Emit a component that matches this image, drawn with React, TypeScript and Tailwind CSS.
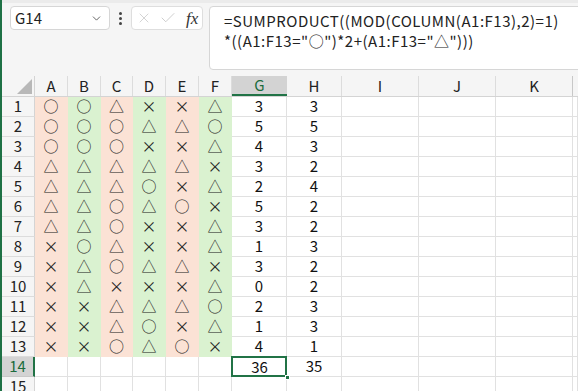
import { ChevronDown, X, Check } from 'lucide-react'

const PEACH = 'bg-[#fbe2d5] border-[#fbe2d5]'
const GREEN = 'bg-[#daf2d0] border-[#daf2d0]'

const symbolCols = ['A', 'B', 'C', 'D', 'E', 'F']
const symbolWidths = ['w-[33px]', 'w-[33px]', 'w-[32px]', 'w-[33px]', 'w-[33px]', 'w-[33px]']

const rows: { marks: string; g: number; h: number }[] = [
  { marks: '○○△××△', g: 3, h: 3 },
  { marks: '○○○△△○', g: 5, h: 5 },
  { marks: '○○○××△', g: 4, h: 3 },
  { marks: '△△△△△×', g: 3, h: 2 },
  { marks: '△△△○×△', g: 2, h: 4 },
  { marks: '△△○△○×', g: 5, h: 2 },
  { marks: '△△○××△', g: 3, h: 2 },
  { marks: '×○△××△', g: 1, h: 3 },
  { marks: '×△○△△×', g: 3, h: 2 },
  { marks: '×△×××△', g: 0, h: 2 },
  { marks: '××△△△○', g: 2, h: 3 },
  { marks: '××△○×△', g: 1, h: 3 },
  { marks: '××○△○×', g: 4, h: 1 },
]

const font = { fontFamily: '"Noto Sans CJK JP", "Noto Sans", sans-serif' }

function RowHeader({ label, selected }: { label: string; selected?: boolean }) {
  return (
    <div
      className={`w-[33px] h-[20px] shrink-0 flex items-center justify-center border-b box-border text-[15px] ${
        selected
          ? 'bg-[#d3d3d3] text-[#1b6b3c] border-r-2 border-r-[#217346] border-b-[#c8c8c8]'
          : 'bg-[#f5f5f5] text-[#222] border-r border-r-[#d4d4d4] border-b-[#dcdcdc]'
      }`}
    >
      {label}
    </div>
  )
}

function Cell({ className, children }: { className: string; children?: React.ReactNode }) {
  return (
    <div className={`h-[20px] shrink-0 box-border border-r border-b flex items-center justify-center text-[15px] text-[#111] ${className}`}>
      {children}
    </div>
  )
}

export default function App() {
  return (
    <div className="w-[578px] h-[391px] overflow-hidden bg-white border-l-2 border-[#1e7145] flex flex-col" style={font}>
      {/* formula bar */}
      <div className="h-[76px] shrink-0 bg-[#f5f5f5] border-t-[3px] border-[#ebebeb] flex items-start pt-[3px] pl-[8px]">
        <div className="w-[100px] h-[24px] shrink-0 bg-white border border-[#d6d6d6] rounded-[4px] flex items-center justify-between pl-[4px] pr-[6px] text-[15px] text-[#222]">
          <span>G14</span>
          <ChevronDown size={13} strokeWidth={1.5} className="text-[#444]" />
        </div>
        <div className="w-[21px] h-[24px] shrink-0 flex flex-col items-center justify-center gap-[2px]">
          <span className="w-[3px] h-[3px] rounded-full bg-[#444]" />
          <span className="w-[3px] h-[3px] rounded-full bg-[#444]" />
          <span className="w-[3px] h-[3px] rounded-full bg-[#444]" />
        </div>
        <div className="w-[72px] h-[24px] shrink-0 bg-white border border-[#dedede] rounded-[4px] flex items-center pl-[4px] gap-[7px]">
          <X size={16} strokeWidth={1.1} className="text-[#c4c4c4]" />
          <Check size={18} strokeWidth={1.1} className="text-[#c4c4c4]" />
          <span className="text-[17px] italic text-[#333] ml-[2px] leading-none" style={{ fontFamily: '"Liberation Serif", serif' }}>
            fx
          </span>
        </div>
        <div className="ml-[6px] w-[400px] h-[64px] shrink-0 bg-white border border-[#d6d6d6] rounded-[4px] pl-[14px] pt-[4px] text-[15px] tracking-[0.5px] leading-[20px] text-[#222] whitespace-nowrap">
          <div>=SUMPRODUCT((MOD(COLUMN(A1:F13),2)=1)</div>
          <div>*((A1:F13="○")*2+(A1:F13="△")))</div>
        </div>
      </div>

      {/* column headers */}
      <div className="flex h-[20px] shrink-0 bg-[#f5f5f5] border-b border-[#d4d4d4] box-content text-[15px] text-[#222]">
        <div className="w-[33px] shrink-0 relative border-r border-[#d4d4d4]">
          <div className="absolute right-[2px] bottom-[2px] w-0 h-0 border-l-[15px] border-l-transparent border-b-[15px] border-b-[#b8b8b8]" />
        </div>
        {symbolCols.map((c, i) => (
          <div key={c} className={`${symbolWidths[i]} shrink-0 flex items-center justify-center border-r border-[#dcdcdc]`}>
            {c}
          </div>
        ))}
        <div className="w-[55px] shrink-0 flex items-center justify-center bg-[#d3d3d3] border-b-2 border-[#217346] text-[#1b6b3c]">
          G
        </div>
        <div className="w-[55px] shrink-0 flex items-center justify-center border-r border-[#dcdcdc]">H</div>
        <div className="w-[77px] shrink-0 flex items-center justify-center border-r border-[#dcdcdc]">I</div>
        <div className="w-[77px] shrink-0 flex items-center justify-center border-r border-[#dcdcdc]">J</div>
        <div className="w-[77px] shrink-0 flex items-center justify-center border-r border-[#c8c8c8]">K</div>
        <div className="flex-1" />
      </div>

      {/* data rows */}
      {rows.map((r, ri) => (
        <div key={ri} className="flex">
          <RowHeader label={String(ri + 1)} />
          {symbolCols.map((c, ci) => (
            <Cell key={c} className={`${symbolWidths[ci]} ${ci % 2 === 0 ? PEACH : GREEN} text-[13px] text-[#222]`}>
              {r.marks[ci]}
            </Cell>
          ))}
          <Cell className="w-[55px] border-[#e1e1e1]">{r.g}</Cell>
          <Cell className="w-[55px] border-[#e1e1e1]">{r.h}</Cell>
          <Cell className="w-[77px] border-[#e1e1e1]" />
          <Cell className="w-[77px] border-[#e1e1e1]" />
          <Cell className="w-[77px] border-[#e1e1e1]" />
          <Cell className="flex-1 border-[#e1e1e1]" />
        </div>
      ))}

      {/* total row */}
      <div className="flex">
        <RowHeader label="14" selected />
        {symbolCols.map((c, ci) => (
          <Cell key={c} className={`${symbolWidths[ci]} border-[#e1e1e1]`} />
        ))}
        <div className="w-[55px] h-[20px] shrink-0 relative flex items-center justify-center text-[15px] text-[#111]">
          <div className="absolute -left-[1px] -top-[1px] right-0 bottom-0 border-2 border-[#217346]" />
          <div className="absolute -right-[3px] -bottom-[3px] w-[5px] h-[5px] bg-[#217346] border border-white" />
          36
        </div>
        <Cell className="w-[55px] border-[#e1e1e1]">35</Cell>
        <Cell className="w-[77px] border-[#e1e1e1]" />
        <Cell className="w-[77px] border-[#e1e1e1]" />
        <Cell className="w-[77px] border-[#e1e1e1]" />
        <Cell className="flex-1 border-[#e1e1e1]" />
      </div>

      <div className="flex">
        <RowHeader label="15" />
        {symbolCols.map((c, ci) => (
          <Cell key={c} className={`${symbolWidths[ci]} border-[#e1e1e1]`} />
        ))}
        <Cell className="w-[55px] border-[#e1e1e1]" />
        <Cell className="w-[55px] border-[#e1e1e1]" />
        <Cell className="w-[77px] border-[#e1e1e1]" />
        <Cell className="w-[77px] border-[#e1e1e1]" />
        <Cell className="w-[77px] border-[#e1e1e1]" />
        <Cell className="flex-1 border-[#e1e1e1]" />
      </div>
    </div>
  )
}
